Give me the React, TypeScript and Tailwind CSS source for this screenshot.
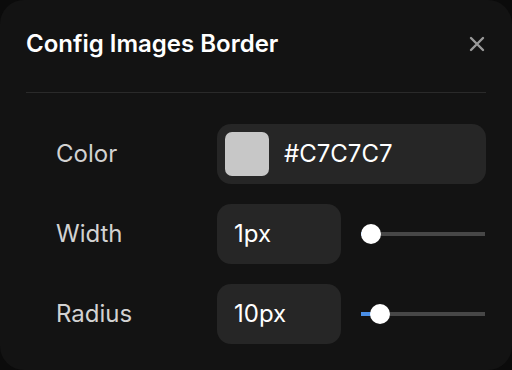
import { useState } from 'react'

function CloseIcon() {
  return (
    <svg width="16" height="16" viewBox="0 0 16 16" fill="none">
      <path d="M2 2L14 14M14 2L2 14" stroke="#9a9a9a" strokeWidth="2.4" strokeLinecap="round" />
    </svg>
  )
}

function Slider({ value, max = 100 }: { value: number; max?: number }) {
  const pct = value / max
  return (
    <div className="relative h-[20px] w-[124px] flex items-center">
      <div className="h-[4px] w-full bg-[#474747]" />
      <div
        className="absolute left-0 top-[8px] h-[4px] bg-[#4a8fe7]"
        style={{ width: `${pct * 104 + 10}px` }}
      />
      <div
        className="absolute top-0 h-[20px] w-[20px] rounded-full bg-white"
        style={{ left: `${pct * 104}px` }}
      />
    </div>
  )
}

export default function App() {
  const [width] = useState(1)
  const [radius] = useState(10)

  return (
    <div className="h-[370px] w-[512px] bg-[#0b0b0b]" style={{ fontFamily: 'Inter, "Noto Sans", sans-serif' }}>
      <div className="h-full w-full rounded-[24px] bg-[#131313] px-[26px]">
        <div className="flex items-center justify-between pt-[28px]">
          <h1 className="text-[24px] font-semibold leading-[32px] text-white">Config Images Border</h1>
          <button className="mr-[1px] flex items-center">
            <CloseIcon />
          </button>
        </div>

        <div className="mt-[32px] h-px bg-[#2a2a2a]" />

        <div className="mt-[31px] flex flex-col gap-[20px]">
          <div className="flex h-[60px] items-center">
            <span className="w-[191px] pl-[30px] text-[24px] text-[#d2d2d2]">Color</span>
            <div className="flex h-[60px] flex-1 items-center gap-[15px] rounded-[14px] bg-[#262626] pl-[8px]">
              <div className="h-[44px] w-[44px] rounded-[7px] bg-[#C7C7C7]" />
              <span className="text-[24px] text-white">#C7C7C7</span>
            </div>
          </div>

          <div className="flex h-[60px] items-center">
            <span className="w-[191px] pl-[30px] text-[24px] text-[#d2d2d2]">Width</span>
            <div className="flex h-[60px] w-[124px] items-center rounded-[14px] bg-[#262626] pl-[17px]">
              <span className="text-[24px] text-white">{width}px</span>
            </div>
            <div className="ml-[20px]">
              <Slider value={width - 1} />
            </div>
          </div>

          <div className="flex h-[60px] items-center">
            <span className="w-[191px] pl-[30px] text-[24px] text-[#d2d2d2]">Radius</span>
            <div className="flex h-[60px] w-[124px] items-center rounded-[14px] bg-[#262626] pl-[17px]">
              <span className="text-[24px] text-white">{radius}px</span>
            </div>
            <div className="ml-[20px]">
              <Slider value={radius - 1} />
            </div>
          </div>
        </div>
      </div>
    </div>
  )
}
